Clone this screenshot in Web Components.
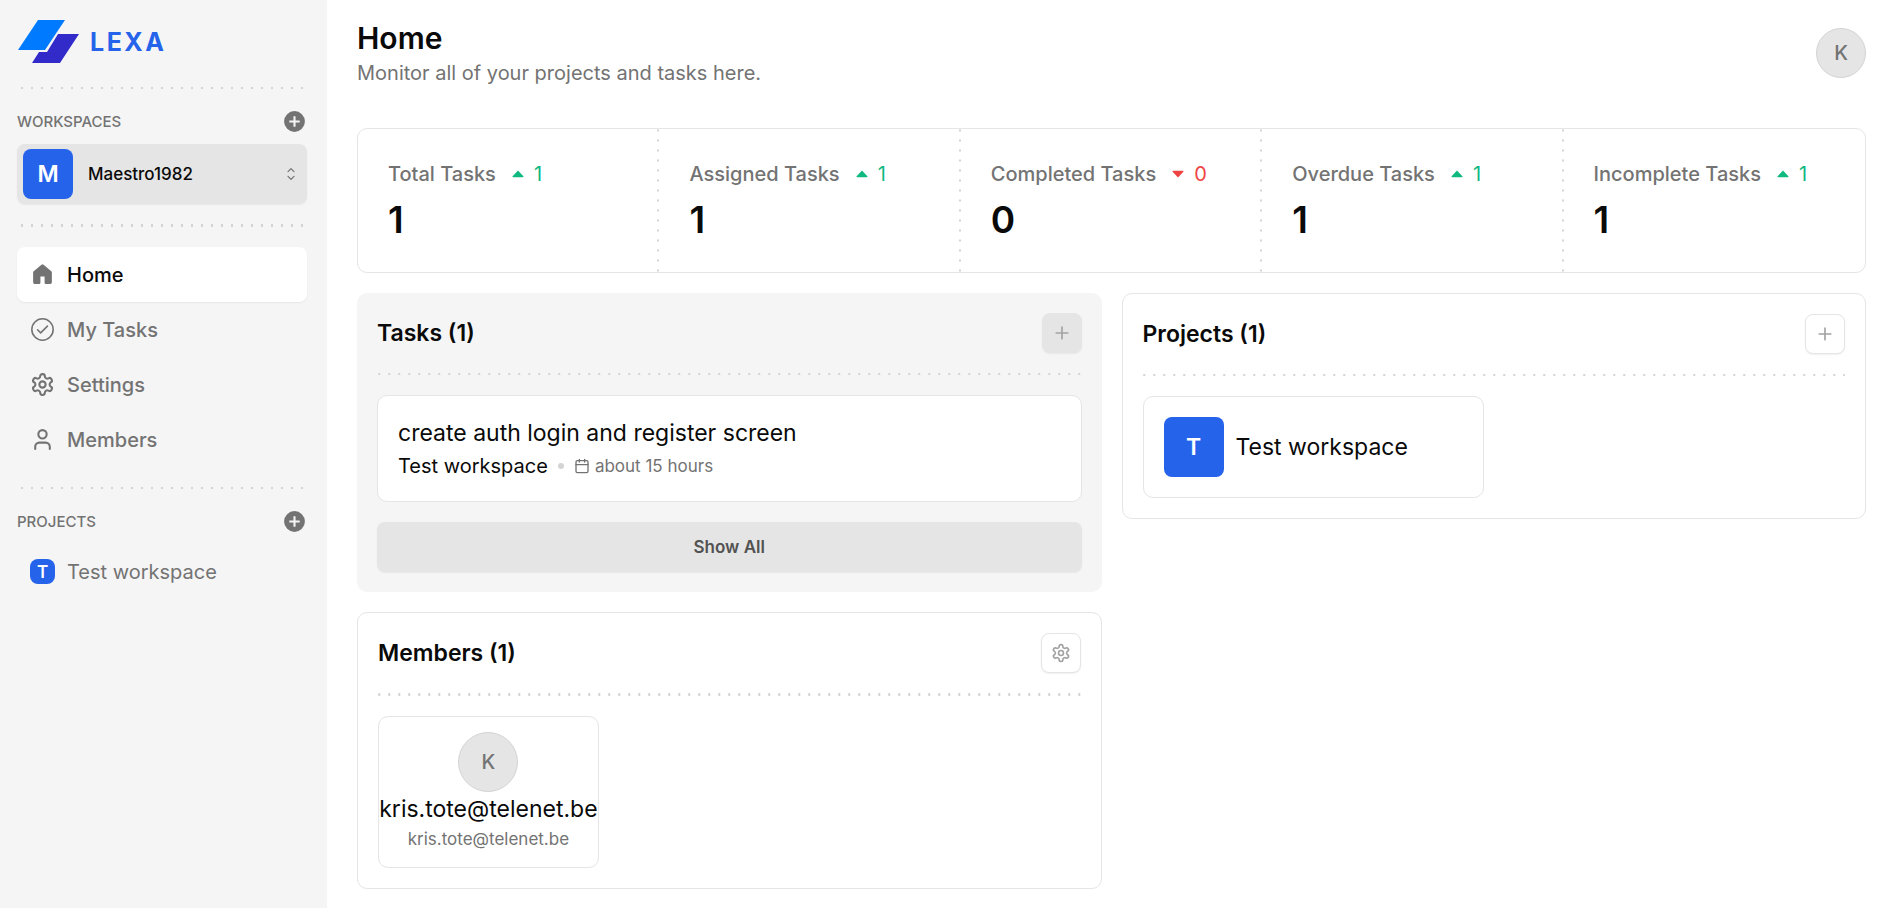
<!DOCTYPE html>
<html lang="en">
<head>
<meta charset="utf-8">
<meta name="viewport" content="width=device-width, initial-scale=1">
<title>Lexa</title>
<style>
  body {
    margin: 0;
    font-family: Inter, "Liberation Sans", sans-serif;
    font-size: 20px;
    line-height: 30px;
    color: #0a0a0a;
    background: #fff;
    --muted: #737373;
    --surface: #f5f5f5;
    --line: #e5e5e5;
    --dot: #d4d4d4;
    --brand: #2563eb;
    --shadow: 0 1px 2px rgba(0, 0, 0, .06);
    --text-xs: 15px;
    --text-sm: 17px;
    --text-lg: 23px;
  }
</style>
</head>
<body>
<lexa-app></lexa-app>

<script>
const define = (name, markup) => {
  const template = document.createElement('template');
  template.innerHTML = '<style>*{box-sizing:border-box}:host{box-sizing:border-box}</style>' + markup;
  customElements.define(name, class extends HTMLElement {
    connectedCallback() {
      if (this.shadowRoot) return;
      const root = this.attachShadow({ mode: 'open' });
      root.append(template.content.cloneNode(true));
      root.querySelectorAll('[data-label]').forEach(el =>
        el.setAttribute('aria-label', this.getAttribute('label') || ''));
      root.querySelectorAll('[data-href]').forEach(el =>
        el.setAttribute('href', this.getAttribute('href') || '#'));
      const icon = root.querySelector('[data-icon]');
      if (icon) icon.setAttribute('name', this.getAttribute('icon') || 'plus');
    }
  });
};

/* Icon set, drawn on a 24px grid unless a viewBox is given */
const ICONS = {
  home: { fill: '<path d="M12.97 2.59a1.5 1.5 0 0 0-1.94 0l-7.5 6.363A1.5 1.5 0 0 0 3 10.097V19.5A1.5 1.5 0 0 0 4.5 21h4.75a.75.75 0 0 0 .75-.75V14h4v6.25c0 .414.336.75.75.75h4.75a1.5 1.5 0 0 0 1.5-1.5v-9.403a1.5 1.5 0 0 0-.53-1.144l-7.5-6.363Z"/>' },
  check: { width: 1.5, stroke: '<circle cx="12" cy="12" r="10.25"/><path d="m7.25 12.25 3 3 6.5-6.5"/>' },
  gear: { width: 2, stroke: '<path d="M12.22 2h-.44a2 2 0 0 0-2 2v.18a2 2 0 0 1-1 1.73l-.43.25a2 2 0 0 1-2 0l-.15-.08a2 2 0 0 0-2.73.73l-.22.38a2 2 0 0 0 .73 2.73l.15.1a2 2 0 0 1 1 1.72v.51a2 2 0 0 1-1 1.74l-.15.09a2 2 0 0 0-.73 2.73l.22.38a2 2 0 0 0 2.73.73l.15-.08a2 2 0 0 1 2 0l.43.25a2 2 0 0 1 1 1.73V20a2 2 0 0 0 2 2h.44a2 2 0 0 0 2-2v-.18a2 2 0 0 1 1-1.73l.43-.25a2 2 0 0 1 2 0l.15.08a2 2 0 0 0 2.73-.73l.22-.39a2 2 0 0 0-.73-2.73l-.15-.08a2 2 0 0 1-1-1.74v-.5a2 2 0 0 1 1-1.74l.15-.09a2 2 0 0 0 .73-2.73l-.22-.38a2 2 0 0 0-2.73-.73l-.15.08a2 2 0 0 1-2 0l-.43-.25a2 2 0 0 1-1-1.73V4a2 2 0 0 0-2-2z"/><circle cx="12" cy="12" r="3"/>' },
  user: { width: 2, stroke: '<path d="M19 21v-2a4 4 0 0 0-4-4H9a4 4 0 0 0-4 4v2"/><circle cx="12" cy="7" r="4"/>' },
  calendar: { width: 2, stroke: '<path d="M8 2v4M16 2v4M3 10h18"/><rect x="3" y="4" width="18" height="18" rx="2"/>' },
  plus: { width: 2, stroke: '<path d="M5 12h14M12 5v14"/>' },
  'plus-circle': { fill: '<path fill-rule="evenodd" d="M12 2a10 10 0 1 1 0 20 10 10 0 0 1 0-20Zm-1 9H7v2h4v4h2v-4h4v-2h-4V7h-2v4Z"/>' },
  sort: { box: '0 0 15 15', width: 0.9, stroke: '<path d="M5.25 5.75 7.5 3.5l2.25 2.25M5.25 9.25 7.5 11.5l2.25-2.25"/>' },
  up: { box: '0 0 12 8', fill: '<path d="M6 .5 11.4 6.200a.6.6 0 0 1-.4 1H1a.6.6 0 0 1-.4-1Z"/>' },
  down: { box: '0 0 12 8', fill: '<path d="M6 7.500.6 1.800a.6.6 0 0 1 .4-1h10a.6.6 0 0 1 .4 1Z"/>' }
};

customElements.define('ui-icon', class extends HTMLElement {
  static observedAttributes = ['name'];
  connectedCallback() { this.render(); }
  attributeChangedCallback() { this.render(); }
  render() {
    const icon = ICONS[this.getAttribute('name')];
    if (!icon) return;
    const root = this.shadowRoot || this.attachShadow({ mode: 'open' });
    const paint = icon.fill
      ? 'fill="currentColor"'
      : `fill="none" stroke="currentColor" stroke-width="${icon.width}" stroke-linecap="round" stroke-linejoin="round"`;
    root.innerHTML = `<style>
      :host{display:block;flex:none;width:25px;height:25px}
      svg{display:block;width:100%;height:100%}
    </style><svg viewBox="${icon.box || '0 0 24 24'}" ${paint} aria-hidden="true">${icon.fill || icon.stroke}</svg>`;
  }
});

define('dotted-rule', `<style>
  :host{display:block;height:2px;margin:20px 0;
    background:linear-gradient(90deg,transparent 4px,var(--dot) 4px 6px,transparent 6px) center/10px 100% repeat-x}
  :host([thick]){height:3px}
</style>`);

define('letter-tile', `<style>
  :host{display:flex;flex:none;align-items:center;justify-content:center;width:60px;height:60px;
    border-radius:8px;background:var(--brand);color:#fff;font-size:var(--text-lg);font-weight:600}
  :host([size=small]){width:25px;height:25px;font-size:var(--text-sm)}
  :host([size=medium]){width:50px;height:50px}
</style><slot></slot>`);

define('user-avatar', `<style>
  :host{display:flex;flex:none;align-items:center;justify-content:center;width:60px;height:60px;
    border:1px solid var(--dot);border-radius:50%;background:var(--line);color:var(--muted);font-weight:500}
  :host([size=medium]){width:50px;height:50px}
</style><slot></slot>`);

define('brand-logo', `<style>
  :host{display:block}
  a{display:flex;align-items:center;gap:10px;color:var(--brand);text-decoration:none;
    font-size:25px;font-weight:700;letter-spacing:.1em}
  svg{display:block;width:63px;height:43px}
</style>
<a href="#"><svg viewBox="0 0 63 43" aria-hidden="true">
  <path fill="#007bff" d="M21 0h27L28 30H1Z"/>
  <path fill="#322bca" d="M41 14h21L43 43H15l7-11h8Z"/>
</svg><slot></slot></a>`);

define('side-heading', `<style>
  :host{display:flex;align-items:center;justify-content:space-between;height:25px;margin-bottom:10px;color:var(--muted)}
  h2{margin:0;font-size:var(--text-xs);font-weight:500;text-transform:uppercase}
  button{all:unset;cursor:pointer}
</style>
<h2><slot></slot></h2><button type="button" data-label><ui-icon name="plus-circle"></ui-icon></button>`);

define('workspace-switcher', `<style>
  :host{display:block}
  label{display:flex;align-items:center;gap:15px;height:60px;padding:0 6px;border-radius:8px;
    background:var(--line);box-shadow:var(--shadow)}
  select{flex:1;min-width:0;height:50px;padding:0;border:0;appearance:none;background:none;color:inherit;
    font:500 var(--text-sm)/30px Inter,"Liberation Sans",sans-serif}
  ui-icon{width:20px;height:20px;color:var(--muted)}
</style>
<label><letter-tile size="medium" aria-hidden="true">M</letter-tile>
  <select aria-label="Workspace"><option>Maestro1982</option></select>
  <ui-icon name="sort"></ui-icon></label>`);

define('nav-item', `<style>
  :host{display:block}
  a{display:flex;align-items:center;gap:12px;height:55px;padding:0 13px;border-radius:8px;
    color:var(--muted);text-decoration:none;font-weight:500}
  :host([plain]) a{font-weight:400}
  :host([active]) a{background:#fff;box-shadow:var(--shadow)}
  :host([active]) .text{color:#0a0a0a}
</style>
<a data-href><slot name="icon"></slot><span class="text"><slot></slot></span></a>`);

define('app-sidebar', `<style>
  :host{display:block;flex:0 0 327px;padding:20px 20px 20px 17px;background:var(--surface)}
  brand-logo{margin-bottom:24px}
</style>
<brand-logo>LEXA</brand-logo>
<dotted-rule></dotted-rule>
<side-heading label="Add workspace">Workspaces</side-heading>
<workspace-switcher></workspace-switcher>
<dotted-rule thick></dotted-rule>
<nav>
  <nav-item href="#home" active><ui-icon slot="icon" name="home"></ui-icon>Home</nav-item>
  <nav-item href="#tasks"><ui-icon slot="icon" name="check"></ui-icon>My Tasks</nav-item>
  <nav-item href="#settings"><ui-icon slot="icon" name="gear"></ui-icon>Settings</nav-item>
  <nav-item href="#members"><ui-icon slot="icon" name="user"></ui-icon>Members</nav-item>
</nav>
<dotted-rule></dotted-rule>
<side-heading label="Add project">Projects</side-heading>
<nav-item href="#project" plain><letter-tile slot="icon" size="small">T</letter-tile>Test workspace</nav-item>`);

define('page-header', `<style>
  :host{display:flex;align-items:center;justify-content:space-between;margin-bottom:40px}
  h1{margin:0;font-size:30px;line-height:40px;font-weight:600}
  p{margin:0;color:var(--muted)}
  button{all:unset;cursor:pointer;border-radius:50%}
</style>
<div><h1><slot name="title"></slot></h1><p><slot></slot></p></div>
<button type="button" aria-label="Account"><user-avatar size="medium">K</user-avatar></button>`);

define('stat-tile', `<style>
  :host{display:block;min-width:0;padding:30px;white-space:nowrap}
  :host(:not(:last-child)){background:linear-gradient(transparent 4px,var(--dot) 4px 6px,transparent 6px) right center/2px 10px repeat-y}
  .row{display:flex;align-items:center;line-height:30px;color:var(--muted);font-weight:500}
  ui-icon{width:12px;height:8px;margin:0 10px 0 16px}
  .trend{display:flex;align-items:center;color:#10b981;font-weight:400}
  :host([trend=down]) .trend{color:#ef4444}
  .value{margin-top:8px;font-size:37px;line-height:45px;font-weight:600}
</style>
<div class="row"><slot></slot><span class="trend"><ui-icon data-icon></ui-icon><slot name="change"></slot></span></div>
<div class="value"><slot name="value"></slot></div>`);

define('stat-strip', `<style>
  :host{display:grid;grid-template-columns:repeat(5,1fr);border:1px solid var(--line);border-radius:10px}
</style><slot></slot>`);

define('panel-card', `<style>
  :host{display:block;min-width:0;padding:20px;border-radius:10px;border:1px solid var(--line)}
  :host([filled]){border:0;background:var(--surface)}
  header{display:flex;align-items:center;justify-content:space-between;height:40px}
  h2{margin:0;font-size:var(--text-lg);font-weight:600}
  button{display:flex;align-items:center;justify-content:center;width:40px;height:40px;padding:0;
    border:1px solid var(--line);border-radius:8px;background:#fff;color:#a3a3a3;box-shadow:var(--shadow)}
  :host([filled]) button{background:var(--line)}
  ui-icon{width:20px;height:20px}
</style>
<header><h2><slot name="title"></slot></h2><button type="button" data-label><ui-icon data-icon></ui-icon></button></header>
<slot name="rule"><dotted-rule></dotted-rule></slot>
<slot></slot>`);

define('task-card', `<style>
  :host{display:block;padding:20px;border:1px solid var(--line);border-radius:10px;background:#fff}
  h3{margin:0;font-size:var(--text-lg);line-height:35px;font-weight:400}
  .meta{display:flex;align-items:center}
  .bullet{width:6px;height:6px;margin:0 10px;border-radius:50%;background:var(--dot)}
  .due{display:flex;align-items:center;gap:5px;color:var(--muted);font-size:var(--text-sm)}
  ui-icon{width:16px;height:16px}
</style>
<h3><slot></slot></h3>
<div class="meta"><slot name="project"></slot><span class="bullet"></span>
<span class="due"><ui-icon name="calendar"></ui-icon><slot name="due"></slot></span></div>`);

define('wide-button', `<style>
  :host{display:block;margin-top:20px}
  button{display:block;width:100%;height:50px;border:0;border-radius:8px;background:var(--line);color:#525252;
    font:600 var(--text-sm)/30px Inter,"Liberation Sans",sans-serif;box-shadow:var(--shadow)}
</style><button type="button"><slot></slot></button>`);

define('project-card', `<style>
  :host{display:block}
  a{display:flex;align-items:center;gap:12px;padding:20px;border:1px solid var(--line);border-radius:10px;
    color:inherit;text-decoration:none;font-size:var(--text-lg)}
</style><a data-href><letter-tile>T</letter-tile><span><slot></slot></span></a>`);

define('member-card', `<style>
  :host{display:flex;flex-direction:column;align-items:center;min-width:0;padding:15px 0;
    border:1px solid var(--line);border-radius:10px}
  .name{font-size:var(--text-lg);line-height:35px}
  .mail{font-size:var(--text-sm);line-height:25px;color:var(--muted)}
</style>
<user-avatar>K</user-avatar>
<span class="name"><slot></slot></span><span class="mail"><slot name="mail"></slot></span>`);

define('card-grid', `<style>
  :host{display:grid;grid-template-columns:repeat(2,minmax(0,1fr));gap:20px;align-items:start}
  :host([columns="3"]){grid-template-columns:repeat(3,minmax(0,1fr))}
</style><slot></slot>`);

define('lexa-app', `<style>
  :host{display:flex;min-height:100vh}
  main{flex:1;min-width:0;padding:18px 24px 19px 30px}
  stat-strip{margin-bottom:20px}
</style>
<app-sidebar></app-sidebar>
<main>
  <page-header><span slot="title">Home</span>Monitor all of your projects and tasks here.</page-header>
  <stat-strip>
    <stat-tile icon="up">Total Tasks<span slot="change">1</span><span slot="value">1</span></stat-tile>
    <stat-tile icon="up">Assigned Tasks<span slot="change">1</span><span slot="value">1</span></stat-tile>
    <stat-tile icon="down" trend="down">Completed Tasks<span slot="change">0</span><span slot="value">0</span></stat-tile>
    <stat-tile icon="up">Overdue Tasks<span slot="change">1</span><span slot="value">1</span></stat-tile>
    <stat-tile icon="up">Incomplete Tasks<span slot="change">1</span><span slot="value">1</span></stat-tile>
  </stat-strip>
  <card-grid>
    <panel-card filled label="Add task"><span slot="title">Tasks (1)</span>
      <task-card>create auth login and register screen<span slot="project">Test workspace</span><span slot="due">about 15 hours</span></task-card>
      <wide-button>Show All</wide-button>
    </panel-card>
    <panel-card label="Add project"><span slot="title">Projects (1)</span>
      <card-grid><project-card href="#project">Test workspace</project-card></card-grid>
    </panel-card>
    <panel-card icon="gear" label="Manage members"><span slot="title">Members (1)</span>
      <dotted-rule slot="rule" thick></dotted-rule>
      <card-grid columns="3"><member-card>kris.tote@telenet.be<span slot="mail">kris.tote@telenet.be</span></member-card></card-grid>
    </panel-card>
  </card-grid>
</main>`);
</script>
</body>
</html>
